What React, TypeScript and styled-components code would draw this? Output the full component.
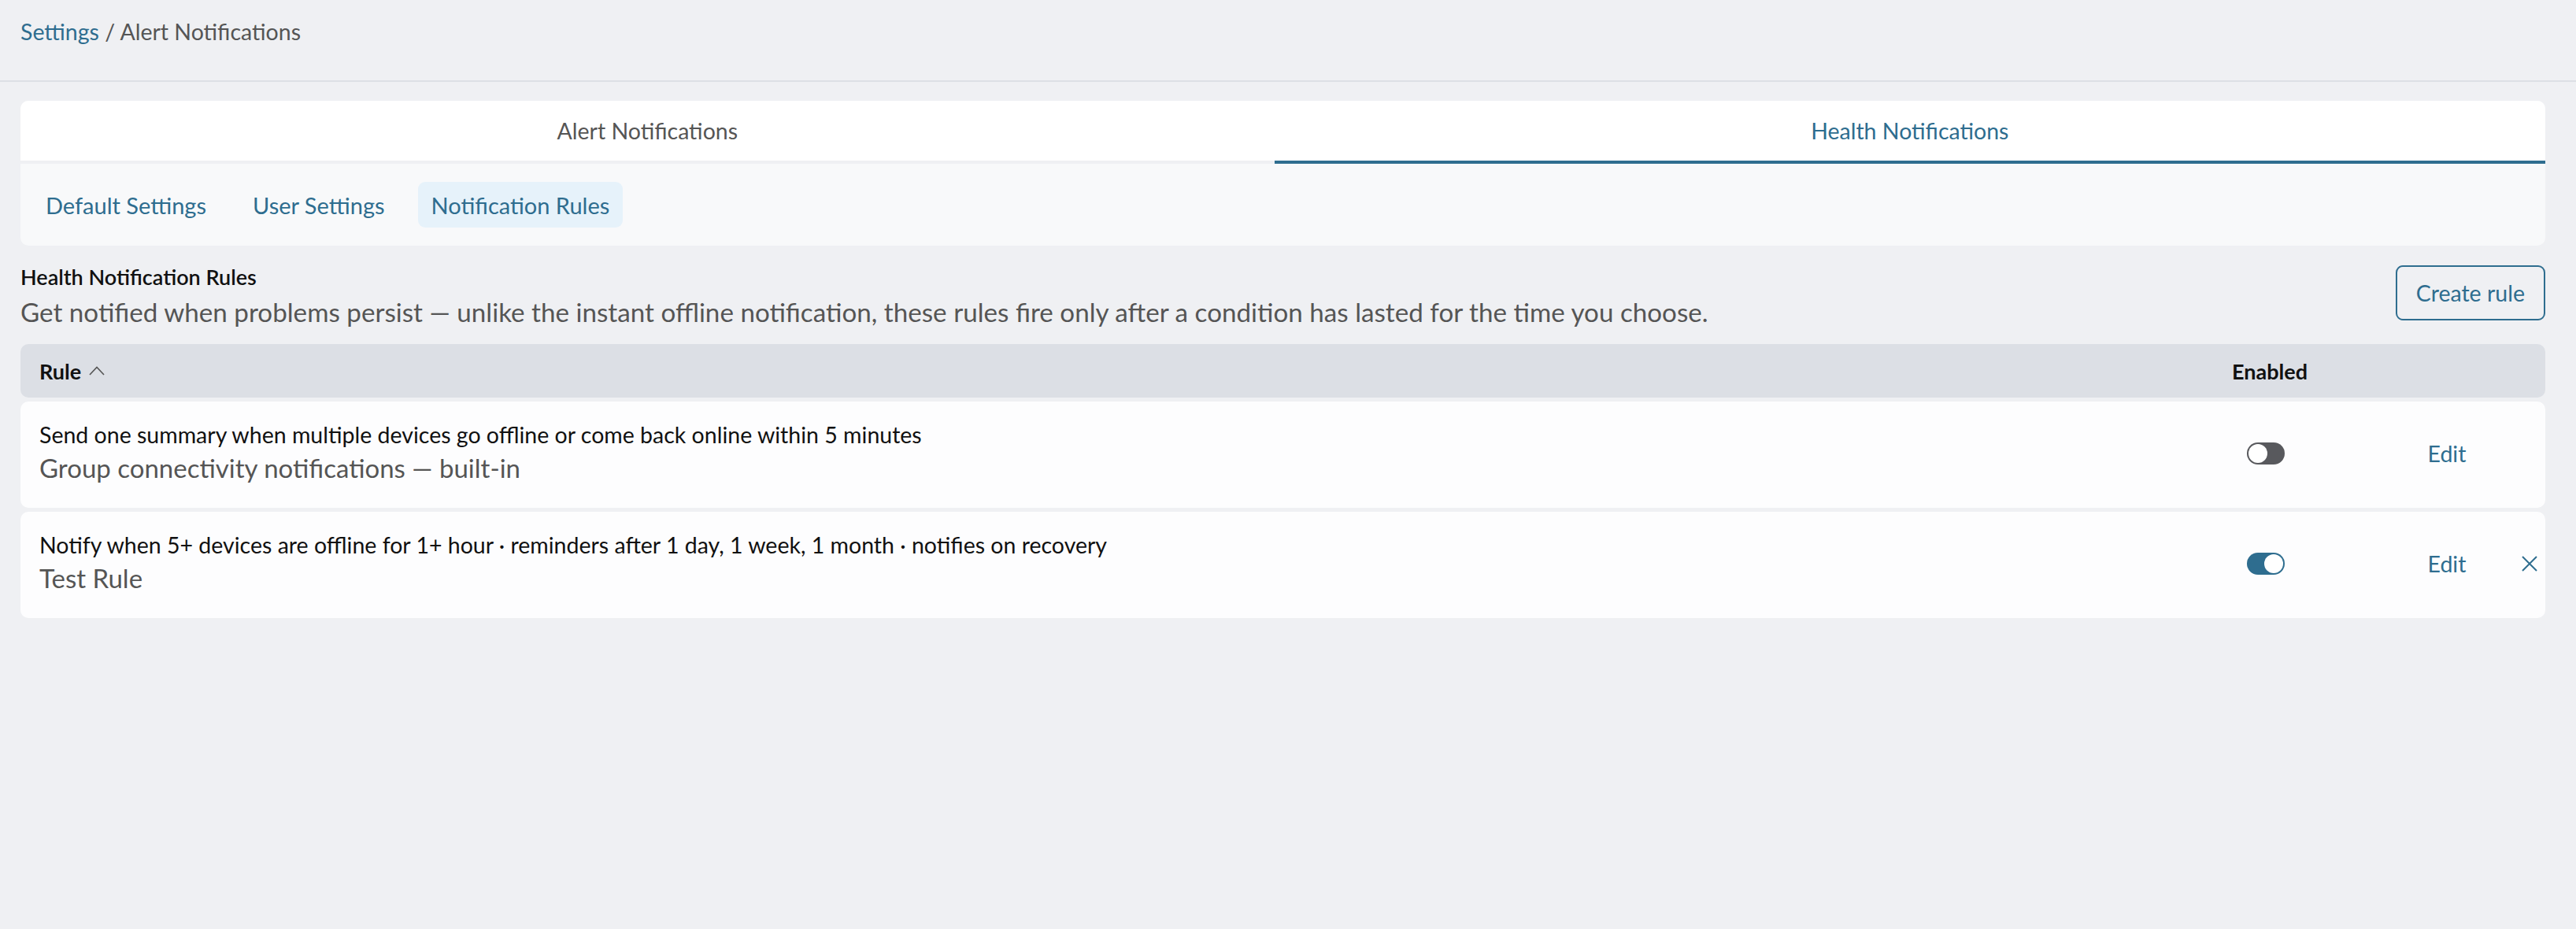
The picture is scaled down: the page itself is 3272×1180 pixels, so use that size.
import React from 'react';
import styled, { createGlobalStyle } from 'styled-components';

const GlobalStyle = createGlobalStyle`
  html, body {
    margin: 0;
    padding: 0;
    background: #eff0f3;
    font-family: Lato, 'Noto Sans', sans-serif;
  }
  * { box-sizing: border-box; }
`;

const Header = styled.header`
  height: 104px;
  padding: 20px 26px 0;
  border-bottom: 2px solid #dde0e5;
  font-size: 28.5px;
  line-height: 40px;
  color: #555;
`;

const Crumb = styled.a`
  color: #2e6d8f;
  text-decoration: none;
`;

const Main = styled.main`
  padding: 24px 39px 0 26px;
`;

const Card = styled.div`
  background: #f8f9fa;
  border-radius: 10px;
  overflow: hidden;
`;

const Tabs = styled.div`
  display: flex;
  background: #fff;
`;

const Tab = styled.div<{ active?: boolean }>`
  flex: 1 1 auto;
  height: 80px;
  display: flex;
  align-items: center;
  justify-content: center;
  font-size: 28.5px;
  color: ${(p) => (p.active ? '#2e6d8f' : '#555')};
  border-bottom: 4px solid ${(p) => (p.active ? '#2e6d8f' : '#eff0f3')};
`;

const SubTabs = styled.div`
  display: flex;
  gap: 25px;
  padding: 23px 15px;
`;

const SubTab = styled.div<{ active?: boolean }>`
  height: 58px;
  padding: 0 17px;
  display: flex;
  align-items: center;
  border-radius: 9px;
  font-size: 29px;
  color: #2e6d8f;
  background: ${(p) => (p.active ? '#e6f2fa' : 'transparent')};
`;

const SectionHead = styled.div`
  display: flex;
  justify-content: space-between;
  align-items: flex-start;
  padding: 22px 0 20px;
`;

const Title = styled.h2`
  margin: 0 0 5px;
  font-size: 27px;
  line-height: 36px;
  font-weight: 600;
  color: #111;
`;

const Description = styled.p`
  margin: 0;
  font-size: 33.2px;
  line-height: 42px;
  color: #555;
`;

const OutlineButton = styled.button`
  height: 70px;
  margin-top: 3px;
  padding: 0 24px;
  border: 2px solid #2e6d8f;
  border-radius: 9px;
  background: transparent;
  color: #2e6d8f;
  font-family: inherit;
  font-size: 28.5px;
`;

const Table = styled.div`
  display: flex;
  flex-direction: column;
  gap: 5px;
`;

const Row = styled.div<{ head?: boolean }>`
  display: grid;
  grid-template-columns: 1fr 276px 176px 41px;
  align-items: center;
  min-height: ${(p) => (p.head ? '68px' : '135px')};
  padding-left: 24px;
  border-radius: 10px;
  background: ${(p) => (p.head ? '#dcdfe5' : '#fdfdfe')};
`;

const HeadCell = styled.div<{ center?: boolean }>`
  display: flex;
  align-items: center;
  justify-content: ${(p) => (p.center ? 'center' : 'flex-start')};
  gap: 10px;
  padding-left: ${(p) => (p.center ? '10px' : '0')};
  font-size: 27px;
  font-weight: 700;
  color: #111;
`;

const RuleBody = styled.div`
  align-self: start;
  padding: 22px 0 29px;
`;

const RuleText = styled.div`
  font-size: 28.5px;
  line-height: 40px;
  color: #111;
`;

const RuleName = styled.div`
  font-size: 33px;
  line-height: 44px;
  color: #555;
`;

const Cell = styled.div`
  display: flex;
  justify-content: center;
  align-items: center;
`;

const Toggle = styled.span<{ on?: boolean }>`
  position: relative;
  width: 48px;
  height: 28px;
  margin-top: -4px;
  border-radius: 14px;
  background: ${(p) => (p.on ? '#2e6d8f' : '#58595d')};

  &::after {
    content: '';
    position: absolute;
    top: 2px;
    left: ${(p) => (p.on ? '22px' : '2px')};
    width: 24px;
    height: 24px;
    border-radius: 50%;
    background: #fff;
  }
`;

const LinkButton = styled.span`
  margin: -4px 0 0 8px;
  font-size: 28.5px;
  color: #2e6d8f;
`;

const rules = [
  {
    text: 'Send one summary when multiple devices go offline or come back online within 5 minutes',
    name: 'Group connectivity notifications — built-in',
    on: false,
    removable: false,
  },
  {
    text: 'Notify when 5+ devices are offline for 1+ hour · reminders after 1 day, 1 week, 1 month · notifies on recovery',
    name: 'Test Rule',
    on: true,
    removable: true,
  },
];

export default function App() {
  return (
    <>
      <GlobalStyle />
      <Header>
        <Crumb href="#">Settings</Crumb> / Alert Notifications
      </Header>
      <Main>
        <Card>
          <Tabs>
            <Tab>Alert Notifications</Tab>
            <Tab active>Health Notifications</Tab>
          </Tabs>
          <SubTabs>
            <SubTab>Default Settings</SubTab>
            <SubTab>User Settings</SubTab>
            <SubTab active>Notification Rules</SubTab>
          </SubTabs>
        </Card>
        <SectionHead>
          <div>
            <Title>Health Notification Rules</Title>
            <Description>
              Get notified when problems persist — unlike the instant offline notification, these rules fire only
              after a condition has lasted for the time you choose.
            </Description>
          </div>
          <OutlineButton type="button">Create rule</OutlineButton>
        </SectionHead>
        <Table>
          <Row head>
            <HeadCell>
              Rule
              <svg width="20" height="12" viewBox="0 0 20 12" fill="none">
                <path d="M1 11L10 1.5L19 11" stroke="#555" strokeWidth="1.6" />
              </svg>
            </HeadCell>
            <HeadCell center>Enabled</HeadCell>
            <span />
            <span />
          </Row>
          {rules.map((r) => (
            <Row key={r.name}>
              <RuleBody>
                <RuleText>{r.text}</RuleText>
                <RuleName>{r.name}</RuleName>
              </RuleBody>
              <Cell>
                <Toggle on={r.on} />
              </Cell>
              <Cell>
                <LinkButton>Edit</LinkButton>
              </Cell>
              <Cell>
                {r.removable && (
                  <svg width="20" height="20" viewBox="0 0 20 20" fill="none" style={{ marginTop: -4 }}>
                    <path d="M1 1L19 19M19 1L1 19" stroke="#2e6d8f" strokeWidth="2" />
                  </svg>
                )}
              </Cell>
            </Row>
          ))}
        </Table>
      </Main>
    </>
  );
}
